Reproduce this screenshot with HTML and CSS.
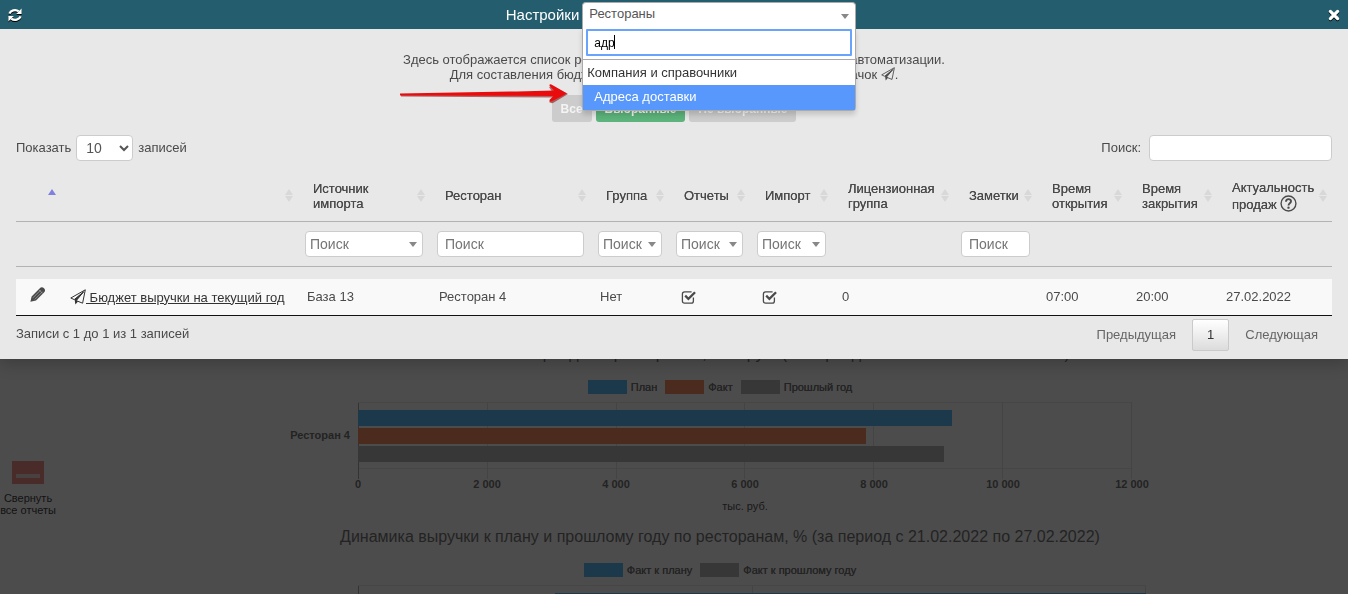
FILE: index.html
```html
<!DOCTYPE html>
<html lang="ru">
<head>
    <meta charset="UTF-8">
    <meta name="viewport" content="width=device-width, initial-scale=1.0">
    <title>Настройки - Рестораны</title>
    <link rel="stylesheet" href="styles.css">
</head>
<body>
    <!-- Icons used on the page -->
    <svg class="sprite" aria-hidden="true">
        <symbol id="icon-plane" viewBox="0 0 16 16">
            <path d="M15.3.8 L.8 9 L4.2 10.6 L13.5 3 L6.2 11.6 L12.6 14.2 Z" fill="none" stroke="currentColor" stroke-width="1" stroke-linejoin="round"/>
            <path d="M15 1 L4.6 10.4 L5.4 15.4 L8 12.4 L6.4 11.4 Z" fill="currentColor"/>
        </symbol>
        <symbol id="icon-pencil" viewBox="0 0 16 16">
            <path d="M.4 14.8 L1.6 9.4 L9.6 1.4 C11 0 12.6 0 14 1.2 C15.4 2.6 15.4 4.2 14 5.6 L6 13.6 Z" fill="currentColor"/>
            <path d="M3 10.8 L10.6 3.2 M4.8 12.4 L12.4 4.8 M9 2.8 L12.6 6.4" stroke="#aaa" stroke-width=".7" fill="none"/>
        </symbol>
        <symbol id="icon-check" viewBox="0 0 16 16">
            <path d="M12.4 8.6 V12 Q12.4 14.2 10.2 14.2 H3.6 Q1.4 14.2 1.4 12 V5 Q1.4 2.8 3.6 2.8 H10.6" fill="none" stroke="currentColor" stroke-width="1.3"/>
            <path d="M3.4 7.4 L5 5.8 L7.4 8.2 L13.2 2.4 L14.9 4.1 L7.4 11.6 Z" fill="currentColor"/>
        </symbol>
    </svg>

    <main class="dashboard">
        <aside class="sidebar">
            <button type="button" class="collapse-button">
                <span class="collapse-icon"></span>
                Свернуть<br>все отчеты
            </button>
        </aside>
        <div class="reports">
            <section class="report">
                <h2 class="report-title">Выполнение планов периода по ресторанам, тыс. руб. (за период с 21.02.2022 по 27.02.2022)</h2>
                <div class="legend">
                    <span class="legend-item"><i class="swatch plan"></i>План</span>
                    <span class="legend-item"><i class="swatch fact"></i>Факт</span>
                    <span class="legend-item"><i class="swatch last-year"></i>Прошлый год</span>
                </div>
                <div class="chart">
                    <div class="chart-label">Ресторан 4</div>
                    <div class="chart-area">
                        <div class="plot">
                            <div class="gridlines"><i></i><i></i><i></i><i></i><i></i><i></i></div>
                            <div class="bar plan" style="width: 76.8%"></div>
                            <div class="bar fact" style="width: 65.6%"></div>
                            <div class="bar last-year" style="width: 75.7%"></div>
                        </div>
                        <div class="ticks">
                            <span>0</span><span>2 000</span><span>4 000</span><span>6 000</span><span>8 000</span><span>10 000</span><span>12 000</span>
                        </div>
                        <div class="axis-title">тыс. руб.</div>
                    </div>
                </div>
            </section>
            <section class="report">
                <h2 class="report-title">Динамика выручки к плану и прошлому году по ресторанам, % (за период с 21.02.2022 по 27.02.2022)</h2>
                <div class="legend">
                    <span class="legend-item"><i class="swatch plan"></i>Факт к плану</span>
                    <span class="legend-item"><i class="swatch last-year"></i>Факт к прошлому году</span>
                </div>
                <div class="chart chart-wide">
                    <div class="chart-label"></div>
                    <div class="chart-area">
                        <div class="plot">
                            <div class="gridlines"><i></i><i></i></div>
                            <div class="bar plan bar-right" style="width: 75%"></div>
                        </div>
                    </div>
                </div>
            </section>
        </div>
    </main>

    <div class="overlay"></div>

    <div class="modal" role="dialog" aria-labelledby="modalTitle">
        <div class="modal-header">
            <button type="button" class="icon-button refresh" aria-label="Обновить">
                <svg width="14" height="14" viewBox="0 0 14 14">
                    <g fill="none" stroke="#fff" stroke-width="2.2">
                        <path d="M1.4 5.6 C2.4 2.4 7.4.8 10.8 3.4"/>
                        <path d="M12.6 8.4 C11.6 11.6 6.6 13.2 3.2 10.6"/>
                    </g>
                    <path d="M13.6.6 V6 H8.2 Z M.4 13.4 V8 H5.8 Z" fill="#fff"/>
                </svg>
            </button>
            <div class="modal-title">
                <h1 id="modalTitle">Настройки</h1>
                <div class="select2">
                    <button type="button" class="select2-choice" aria-expanded="true">Рестораны</button>
                    <div class="select2-drop">
                        <div class="select2-search">
                            <input type="text" value="адр" aria-label="Поиск раздела">
                            <i class="caret-line"></i>
                        </div>
                        <div class="select2-group">Компания и справочники</div>
                        <ul class="select2-results" role="listbox">
                            <li role="option" aria-selected="true">Адреса доставки</li>
                        </ul>
                    </div>
                    <svg class="pointer" width="170" height="22" viewBox="0 0 170 22" aria-hidden="true">
                        <path d="M2 12 L154 10 L150 4 L154 3 L169 11 L154 20 Q152 20.5 150 19 L154 14.5 L2 13.5 Z" fill="#8a1010" opacity=".6"/>
                        <path d="M1 10.6 L118 8.4 L155 7.6 L150.6 3 Q150 .8 152.4 1.4 L168 10.4 L152.4 18.6 Q150 19 150.6 16.8 L154.4 13 L118 12.8 L1 12.4 Z" fill="#ea0c0c"/>
                    </svg>
                </div>
            </div>
            <button type="button" class="icon-button close" aria-label="Закрыть">
                <svg width="12" height="12" viewBox="0 0 12 12">
                    <path d="M2.4 2.4 L9.6 9.6 M9.6 2.4 L2.4 9.6" stroke="#fff" stroke-width="3.2" stroke-linecap="round"/>
                </svg>
            </button>
        </div>

        <div class="modal-body">
            <p class="description">
                Здесь отображается список ресторанов, подключенных к Вашей системе автоматизации.<br>
                Для составления бюджета выручки по ресторанам, нажмите на значок <svg class="icon-plane"><use href="#icon-plane"/></svg>.
            </p>
            <div class="filter-buttons">
                <button type="button" class="filter-button">Все</button>
                <button type="button" class="filter-button active">Выбранные</button>
                <button type="button" class="filter-button">Не выбранные</button>
            </div>

            <div class="table-controls">
                <label>Показать
                    <select class="length-select">
                        <option>10</option>
                        <option>25</option>
                    </select>
                    записей
                </label>
                <label class="search-label">Поиск: <input type="search" class="field search-field"></label>
            </div>

            <table class="data-table">
                <colgroup>
                    <col class="col-edit"><col><col class="col-source"><col class="col-name"><col class="col-group"><col class="col-reports"><col class="col-import"><col class="col-license"><col class="col-notes"><col class="col-time"><col class="col-time"><col class="col-sales">
                </colgroup>
                <thead>
                    <tr class="titles">
                        <th class="asc"></th>
                        <th></th>
                        <th>Источник импорта</th>
                        <th>Ресторан</th>
                        <th>Группа</th>
                        <th>Отчеты</th>
                        <th>Импорт</th>
                        <th>Лицензионная группа</th>
                        <th>Заметки</th>
                        <th>Время открытия</th>
                        <th>Время закрытия</th>
                        <th>Актуальность продаж <svg class="icon-help" viewBox="0 0 16 16"><circle cx="8" cy="8" r="7" fill="none" stroke="currentColor" stroke-width="1.3"/><path d="M5.6 6.4 C5.6 3 10.6 3.2 10.4 6 C10.3 7.8 8 7.8 8 9.8" fill="none" stroke="currentColor" stroke-width="1.7"/><circle cx="8" cy="11.9" r="1.1" fill="currentColor"/></svg></th>
                    </tr>
                    <tr class="filters">
                        <td></td>
                        <td></td>
                        <td><div class="dropdown"><select class="field" aria-label="Источник импорта"><option>Поиск</option></select></div></td>
                        <td><input type="text" class="field" placeholder="Поиск" aria-label="Ресторан"></td>
                        <td><div class="dropdown"><select class="field" aria-label="Группа"><option>Поиск</option></select></div></td>
                        <td><div class="dropdown"><select class="field" aria-label="Отчеты"><option>Поиск</option></select></div></td>
                        <td><div class="dropdown"><select class="field" aria-label="Импорт"><option>Поиск</option></select></div></td>
                        <td></td>
                        <td><input type="text" class="field" placeholder="Поиск" aria-label="Заметки"></td>
                        <td></td>
                        <td></td>
                        <td></td>
                    </tr>
                </thead>
                <tbody>
                    <tr>
                        <td class="edit-cell"><button type="button" class="icon-button" aria-label="Редактировать"><svg class="icon"><use href="#icon-pencil"/></svg></button></td>
                        <td class="link-cell"><a href="#" class="budget-link"><svg class="icon"><use href="#icon-plane"/></svg> Бюджет выручки на текущий год</a></td>
                        <td>База 13</td>
                        <td>Ресторан 4</td>
                        <td>Нет</td>
                        <td class="check-cell"><svg class="icon"><use href="#icon-check"/></svg></td>
                        <td class="check-cell"><svg class="icon"><use href="#icon-check"/></svg></td>
                        <td>0</td>
                        <td></td>
                        <td>07:00</td>
                        <td>20:00</td>
                        <td>27.02.2022</td>
                    </tr>
                </tbody>
            </table>

            <div class="table-footer">
                <div class="info">Записи с 1 до 1 из 1 записей</div>
                <div class="pagination">
                    <button type="button" class="page-button">Предыдущая</button>
                    <button type="button" class="page-button current">1</button>
                    <button type="button" class="page-button">Следующая</button>
                </div>
            </div>
        </div>
    </div>
</body>
</html>
```
FILE: styles.css
```css
* {
    box-sizing: border-box;
}

body {
    margin: 0;
    overflow: hidden;
    background: #fff;
    color: #4a4a4a;
    font-family: "Liberation Sans", Arial, sans-serif;
    font-size: 14px;
    line-height: 16px;
}

button,
input,
select {
    font-family: inherit;
    font-size: 14px;
    color: inherit;
}

.sprite {
    display: none;
}

.icon {
    width: 16px;
    height: 16px;
    vertical-align: -3px;
}

/* Dashboard behind the dialog */
.dashboard {
    display: flex;
    height: 100vh;
    padding-top: 344px;
    overflow: hidden;
    color: #777;
}

.sidebar {
    flex: 0 0 92px;
    padding-top: 117px;
}

.collapse-button {
    width: 56px;
    padding: 0;
    border: none;
    background: none;
    color: #444;
    font-size: 11px;
    line-height: 12px;
    white-space: nowrap;
}

.collapse-icon {
    display: block;
    width: 32px;
    height: 23px;
    margin: 0 auto 8px;
    padding: 13px 4px 6px;
    background: #f3928c;
}

.collapse-icon::before {
    content: '';
    display: block;
    height: 4px;
    background: #f5d5d5;
}

.reports {
    flex: 1;
}

.report-title {
    margin: 0;
    font-size: 16px;
    font-weight: 400;
    line-height: 20px;
    text-align: center;
}

.legend {
    display: flex;
    justify-content: center;
    gap: 8px;
    padding: 16px 0 8px;
    font-size: 11px;
    line-height: 14px;
    text-shadow: 0 0 0 #777;
}

.legend-item {
    display: flex;
    align-items: center;
    gap: 4px;
}

.swatch {
    width: 39px;
    height: 14px;
}

.plan {
    background: #5ebfff;
}

.fact {
    background: #ff916a;
}

.last-year {
    background: #b8b8b8;
}

.chart {
    display: flex;
    width: 860px;
    max-width: 100%;
    margin: 0 auto;
    padding-right: 18px;
    font-size: 11px;
    font-weight: 700;
    line-height: 12px;
}

.chart-label {
    flex: 0 0 60px;
    padding-top: 27px;
    text-align: right;
}

.chart-area {
    flex: 1;
    margin-left: 8px;
}

.plot {
    position: relative;
    height: 67px;
    padding-top: 7px;
    border: solid #eaeaea;
    border-width: 1px 0;
}

.gridlines {
    position: absolute;
    top: 0;
    left: 0;
    display: flex;
    width: 100%;
    height: 76px;
    border-left: 1px solid #aaa;
}

.gridlines i {
    flex: 1;
    border-right: 1px solid #e4e4e4;
}

.bar {
    position: relative;
    height: 16px;
    margin-bottom: 2px;
}

.bar-right {
    margin-left: auto;
}

.chart-wide {
    padding-right: 4px;
}

.ticks {
    display: flex;
    justify-content: space-between;
    padding-top: 9px;
}

.ticks span {
    display: flex;
    justify-content: center;
    width: 0;
    white-space: nowrap;
}

.axis-title {
    padding: 10px 0 15px;
    font-weight: 400;
    text-align: center;
    color: #555;
}

.overlay {
    position: fixed;
    inset: 0;
    background: rgba(0, 0, 0, 0.7);
}

/* Dialog */
.modal {
    position: absolute;
    top: 0;
    left: 0;
    width: 100%;
    background: #e8e8e8;
    box-shadow: 0 5px 15px rgba(0, 0, 0, 0.2);
}

.modal-header {
    display: flex;
    align-items: center;
    height: 29px;
    padding: 0 8px;
    background: #245e6e;
}

.icon-button {
    padding: 0;
    border: none;
    background: none;
    line-height: 0;
    cursor: pointer;
}

.refresh {
    width: 26px;
    text-align: left;
}

.refresh svg,
.close svg {
    filter: drop-shadow(0 1px 0 #000);
}

.modal-title {
    display: flex;
    flex: 1;
    justify-content: center;
    align-items: center;
    gap: 3px;
}

.modal-title h1 {
    margin: 0;
    color: #fff;
    font-size: 15px;
    font-weight: 400;
}

/* Section picker */
.select2 {
    position: relative;
    width: 274px;
    font-size: 13px;
}

.select2-choice {
    position: relative;
    display: block;
    width: 100%;
    height: 25px;
    padding: 0 6px 4px;
    border: 1px solid #aaa;
    border-bottom: none;
    border-radius: 4px 4px 0 0;
    background: #fff;
    color: #555;
    font-size: 13px;
    text-align: left;
}

.select2-choice::after,
.dropdown::after {
    content: '';
    position: absolute;
    top: 11px;
    right: 6px;
    border: solid transparent;
    border-width: 5px 4px 0;
    border-top-color: #888;
}

.select2-drop {
    position: absolute;
    top: 25px;
    left: 0;
    z-index: 10;
    width: 100%;
    border: 1px solid #aaa;
    border-top: none;
    border-radius: 0 0 4px 4px;
    background: #fff;
    box-shadow: 0 4px 5px rgba(0, 0, 0, 0.15);
}

.select2-search {
    position: relative;
    padding: 2px 3px 3px;
    border-bottom: 1px solid #aaa;
}

.select2-search input {
    display: block;
    width: 100%;
    height: 27px;
    padding: 0 6px;
    border: 2px solid #6aa3fb;
    outline: none;
    border-radius: 1px;
    background: #fff;
    color: #000;
    font-size: 12px;
}

.caret-line {
    position: absolute;
    top: 8px;
    left: 31px;
    width: 1px;
    height: 14px;
    background: #000;
}

.select2-group {
    padding: 5px 4px 4px;
    color: #333;
}

.select2-results {
    margin: 0;
    padding: 0;
    list-style: none;
}

.select2-results li {
    padding: 4px 11px 5px;
    background: #5897fb;
    color: #fff;
}

.pointer {
    position: absolute;
    top: 81px;
    right: 100%;
    margin-right: 13px;
}

.modal-body {
    padding: 23px 16px 8px;
}

.description {
    margin: 0;
    font-size: 13px;
    line-height: 15px;
    text-align: center;
}

.icon-plane {
    width: 14px;
    height: 14px;
    vertical-align: -2px;
}

.filter-buttons {
    display: flex;
    justify-content: center;
    gap: 4px;
    margin-top: 13px;
}

.filter-button {
    height: 27px;
    padding: 0 9px;
    border: none;
    border-radius: 3px;
    background: #ccc;
    color: #f4f4f4;
    font-size: 12px;
    font-weight: 700;
}

.filter-button.active {
    background: #5cb37b;
}

.table-controls {
    display: flex;
    justify-content: space-between;
    align-items: center;
    margin-top: 13px;
    font-size: 13px;
}

.table-controls label {
    display: flex;
    align-items: center;
    gap: 5px;
}

.table-controls .search-label {
    gap: 8px;
}

.field,
.length-select {
    height: 26px;
    border: 1px solid #ccc;
    border-radius: 4px;
    background: #fff;
    color: #555;
}

.length-select {
    width: 57px;
    padding-left: 5px;
}

.field {
    display: block;
    width: 100%;
    padding: 0 7px;
    outline: none;
}

.field::placeholder {
    color: #757575;
    opacity: 1;
}

.search-field {
    width: 183px;
}

.dropdown {
    position: relative;
}

.dropdown .field {
    padding: 0 4px;
    color: #757575;
    appearance: none;
}

/* Table */
.data-table {
    width: 100%;
    margin-top: 9px;
    border-collapse: separate;
    border-spacing: 0;
    table-layout: fixed;
    font-size: 13px;
}

.col-edit { width: 45px; }
.col-source { width: 132px; }
.col-name { width: 161px; }
.col-group { width: 78px; }
.col-reports { width: 81px; }
.col-import { width: 83px; }
.col-license { width: 121px; }
.col-notes { width: 83px; }
.col-time { width: 90px; }
.col-sales { width: 115px; }

.titles th {
    position: relative;
    height: 52px;
    padding: 0 15px;
    border-bottom: 1px solid #b3b3b3;
    font-weight: 400;
    line-height: 15px;
    text-align: left;
    text-shadow: 0 0 0 #4a4a4a;
}

/* Sort arrows */
.titles th::before,
.titles th::after {
    content: '';
    position: absolute;
    right: 5px;
    border: solid transparent;
}

.titles th::before {
    top: 19px;
    border-width: 0 4px 6px;
    border-bottom-color: #d8d8d8;
}

.titles th::after {
    top: 26px;
    border-width: 6px 4px 0;
    border-top-color: #d8d8d8;
}

.titles .asc::before {
    border-bottom-color: #8080e0;
}

.titles .asc::after {
    display: none;
}

.icon-help {
    width: 17px;
    height: 17px;
    vertical-align: -3px;
}

.filters td {
    height: 45px;
    padding: 0 7px;
    border-bottom: 1px solid #b3b3b3;
}

tbody::before {
    content: '';
    display: block;
    height: 12px;
}

tbody td {
    height: 37px;
    padding: 0 9px;
    border-bottom: 1px solid #111;
    background: #f9f9f9;
}

tbody .edit-cell {
    padding: 0 2px 3px 0;
    text-align: center;
}

tbody .check-cell {
    padding-left: 12px;
}

tbody .link-cell {
    padding-right: 0;
    white-space: nowrap;
}

.budget-link {
    color: #333;
}

.table-footer {
    display: flex;
    justify-content: space-between;
    margin-top: 3px;
    font-size: 13px;
}

.info {
    padding-top: 7px;
}

.pagination {
    display: flex;
    gap: 2px;
}

.page-button {
    height: 32px;
    padding: 0 13px 2px;
    border: 1px solid transparent;
    border-radius: 2px;
    background: none;
    color: #666;
    font-size: 13px;
}

.page-button.current {
    padding: 0 14px 2px;
    border-color: #cacaca;
    background: linear-gradient(#fff, #dcdcdc);
    color: #333;
}
```
